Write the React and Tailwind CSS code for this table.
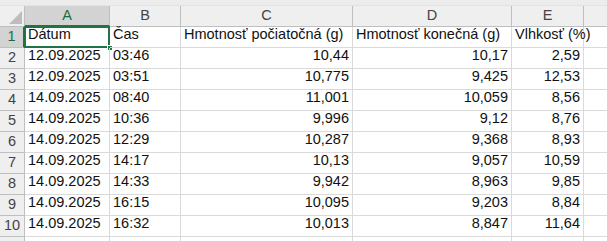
import React from 'react';

const cols = [
  { key: 'A', w: 'w-[85px]' },
  { key: 'B', w: 'w-[71px]' },
  { key: 'C', w: 'w-[172px]' },
  { key: 'D', w: 'w-[159px]' },
  { key: 'E', w: 'w-[72px]' },
  { key: 'F', w: 'w-[60px]' },
];

const rows = [
  ['Dátum', 'Čas', 'Hmotnosť počiatočná (g)', 'Hmotnosť konečná (g)', 'Vlhkosť (%)'],
  ['12.09.2025', '03:46', '10,44', '10,17', '2,59'],
  ['12.09.2025', '03:51', '10,775', '9,425', '12,53'],
  ['14.09.2025', '08:40', '11,001', '10,059', '8,56'],
  ['14.09.2025', '10:36', '9,996', '9,12', '8,76'],
  ['14.09.2025', '12:29', '10,287', '9,368', '8,93'],
  ['14.09.2025', '14:17', '10,13', '9,057', '10,59'],
  ['14.09.2025', '14:33', '9,942', '8,963', '9,85'],
  ['14.09.2025', '16:15', '10,095', '9,203', '8,84'],
  ['14.09.2025', '16:32', '10,013', '8,847', '11,64'],
  ['', '', '', '', ''],
];

function App() {
  return (
    <div className="w-[607px] h-[241px] overflow-hidden bg-white text-[14.5px] text-[#111] font-['Liberation_Sans',Arial,sans-serif]">
      <div className="h-[6px] bg-[#ececec] border-b border-[#e2e2e2]"></div>

      {/* column headers */}
      <div className="flex h-[21px]">
        <div className="w-[25px] shrink-0 bg-[#efefef] border-r border-b border-[#bfbfbf] relative">
          <svg width="25" height="21" className="absolute inset-0">
            <polygon points="9,18 22,18 22,5" fill="#bdbdbd" />
          </svg>
        </div>
        {cols.map((c) => (
          <div
            key={c.key}
            className={`${c.w} shrink-0 flex items-center justify-center border-r ${
              c.key === 'A'
                ? 'bg-[#d3d3d3] text-[#1e6b41] border-b-2 border-b-[#217346] border-r-[#bfbfbf]'
                : 'bg-[#efefef] text-[#444] border-b border-[#bfbfbf]'
            }`}
          >
            {c.key === 'F' ? '' : c.key}
          </div>
        ))}
      </div>

      {rows.map((r, i) => (
        <div key={i} className="flex h-[21px]">
          <div
            className={`w-[25px] shrink-0 flex items-center justify-center border-r border-b border-[#bfbfbf] ${
              i === 0 ? 'bg-[#d3d3d3] text-[#1e6b41] border-r-2 border-r-[#217346]' : 'bg-[#efefef] text-[#444]'
            }`}
          >
            {i < 10 ? i + 1 : ''}
          </div>
          {cols.map((c, j) => {
            const v = r[j] || '';
            const right = i > 0 && j >= 2;
            const selected = i === 0 && j === 0;
            return (
              <div
                key={c.key}
                className={`${c.w} shrink-0 relative flex items-end pb-[1px] px-[3px] whitespace-nowrap border-r border-b border-[#dadada] ${
                  right ? 'justify-end' : 'justify-start'
                }`}
              >
                {selected && (
                  <>
                    <div className="absolute -left-[1px] -top-[1px] -right-[1px] -bottom-[1px] border-2 border-[#217346]"></div>
                    <div className="absolute -right-[4px] -bottom-[4px] w-[6px] h-[6px] bg-[#217346] border border-white"></div>
                  </>
                )}
                {v}
              </div>
            );
          })}
        </div>
      ))}
    </div>
  );
}

export default App;
